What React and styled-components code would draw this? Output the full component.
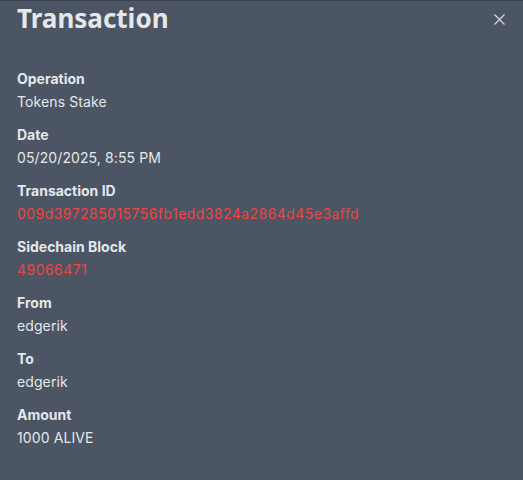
import React from "react";
import styled, { createGlobalStyle } from "styled-components";

const Global = createGlobalStyle`
  html, body { margin: 0; padding: 0; background: #4b5563; }
  body { font-family: Inter, "Noto Sans", sans-serif; }
`;

const Panel = styled.div`
  box-sizing: border-box;
  width: 523px;
  height: 480px;
  background: #4b5563;
  border-top: 1px solid #3b4350;
  padding: 0 17px;
  display: flex;
  flex-direction: column;
`;

const Header = styled.div`
  display: flex;
  align-items: flex-start;
  justify-content: space-between;
  margin-top: -1px;
`;

const Title = styled.h2`
  margin: 0;
  font-family: "Noto Sans", sans-serif;
  font-size: 26px;
  line-height: 36px;
  font-weight: 700;
  color: #e5e7eb;
`;

const Close = styled.button`
  background: none;
  border: 0;
  padding: 0;
  margin: 12px 0 0 0;
  width: 14px;
  height: 14px;
  color: #d1d5db;
  display: flex;
  align-items: center;
  justify-content: center;
  cursor: pointer;
`;

const List = styled.dl`
  margin: 32px 0 0 0;
  display: flex;
  flex-direction: column;
  gap: 11px;
`;

const Item = styled.div`
  display: flex;
  flex-direction: column;
  gap: 2px;
`;

const Label = styled.dt`
  font-size: 14px;
  line-height: 21px;
  font-weight: 700;
  color: #e5e7eb;
`;

const Value = styled.dd`
  margin: 0;
  font-size: 14px;
  line-height: 22px;
  letter-spacing: ${(p) => (p.$link ? "0.45px" : "0.1px")};
  color: ${(p) => (p.$link ? "#ef4444" : "#e5e7eb")};
`;

const rows = [
  { label: "Operation", value: "Tokens Stake" },
  { label: "Date", value: "05/20/2025, 8:55 PM" },
  { label: "Transaction ID", value: "009d397285015756fb1edd3824a2864d45e3affd", link: true },
  { label: "Sidechain Block", value: "49066471", link: true },
  { label: "From", value: "edgerik" },
  { label: "To", value: "edgerik" },
  { label: "Amount", value: "1000 ALIVE" },
];

export default function App() {
  return (
    <>
      <Global />
      <Panel>
        <Header>
          <Title>Transaction</Title>
          <Close aria-label="Close">
            <svg width="11" height="11" viewBox="0 0 11 11" fill="none" stroke="currentColor" strokeWidth="1.3">
              <path d="M0.5 0.5 L10.5 10.5 M10.5 0.5 L0.5 10.5" />
            </svg>
          </Close>
        </Header>
        <List>
          {rows.map((r) => (
            <Item key={r.label}>
              <Label>{r.label}</Label>
              <Value $link={r.link}>{r.value}</Value>
            </Item>
          ))}
        </List>
      </Panel>
    </>
  );
}
